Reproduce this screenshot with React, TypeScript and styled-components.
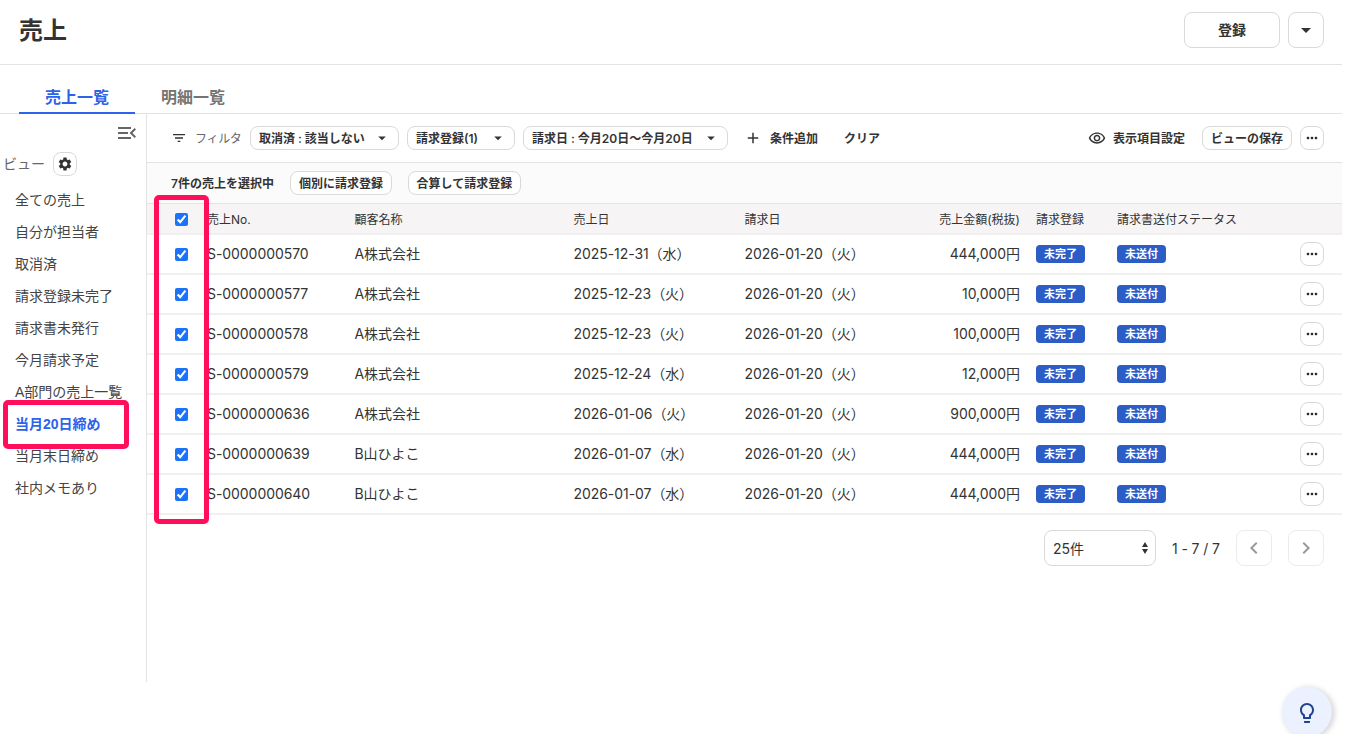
import React from 'react';
import styled, { createGlobalStyle } from 'styled-components';
import {
  MdAdd,
  MdArrowDropDown,
  MdChevronLeft,
  MdChevronRight,
  MdFilterList,
  MdLightbulbOutline,
  MdMenuOpen,
  MdOutlineRemoveRedEye,
  MdSettings,
} from 'react-icons/md';

const GlobalStyle = createGlobalStyle`
  *, *::before, *::after { box-sizing: border-box; }
  body {
    margin: 0;
    background: #fff;
    color: #333;
    font-family: Inter, "Noto Sans CJK JP", sans-serif;
    font-size: 14px;
    overflow: hidden;
  }
  button { font: inherit; color: inherit; padding: 0; cursor: pointer; }
`;

const Page = styled.div`
  position: relative;
  width: 1342px;
  height: 734px;
`;

const Header = styled.header`
  display: flex;
  align-items: center;
  height: 65px;
  padding: 0 18px 5px 19px;
  border-bottom: 1px solid #e3e3e3;
`;

const Title = styled.h1`
  flex: 1;
  margin: 0;
  padding-top: 2px;
  font-size: 24px;
  line-height: 36px;
  font-weight: 700;
`;

const Button = styled.button<{ $w: number; $h?: number; $size?: number; $muted?: boolean }>`
  display: inline-flex;
  align-items: center;
  justify-content: center;
  flex: none;
  width: ${(p) => p.$w}px;
  height: ${(p) => p.$h ?? 24}px;
  border: 1px solid ${(p) => (p.$muted ? '#ebebeb' : '#d9d9d9')};
  border-radius: 8px;
  background: #fff;
  font-size: ${(p) => p.$size ?? 12}px;
  font-weight: 600;
  white-space: nowrap;
  color: ${(p) => (p.$muted ? '#999' : '#333')};
`;

const Label = styled.span`
  padding-bottom: 2px;
`;

const HeaderActions = styled.div`
  display: flex;
  gap: 8px;
`;

const Tabs = styled.nav`
  display: flex;
  height: 49px;
  padding-left: 19px;
  border-bottom: 1px solid #e3e3e3;
`;

const Tab = styled.div<{ $active?: boolean }>`
  display: flex;
  align-items: flex-end;
  justify-content: center;
  width: 116px;
  height: 49px;
  padding-bottom: 3px;
  border-bottom: 2px solid ${(p) => (p.$active ? '#2e62ea' : 'transparent')};
  color: ${(p) => (p.$active ? '#2e62ea' : '#747474')};
  font-size: 16px;
  line-height: 24px;
  font-weight: 600;
`;

const Body = styled.div`
  display: flex;
  height: 568px;
`;

const Sidebar = styled.aside`
  width: 147px;
  border-right: 1px solid #e3e3e3;
`;

const CollapseRow = styled.div`
  display: flex;
  justify-content: flex-end;
  height: 38px;
  padding: 7px 7px 0 0;
  color: #666;
`;

const ViewHeading = styled.div`
  display: flex;
  align-items: center;
  gap: 8px;
  height: 24px;
  padding-left: 3px;
  color: #666;
`;

const ViewList = styled.ul`
  list-style: none;
  margin: 8px 0 0;
  padding: 0 0 0 15px;
`;

const ViewItem = styled.li<{ $active?: boolean }>`
  height: 32px;
  line-height: 32px;
  white-space: nowrap;
  color: ${(p) => (p.$active ? '#2e62ea' : '#444')};
  font-family: "Liberation Sans", "Noto Sans CJK JP", sans-serif;
  font-weight: ${(p) => (p.$active ? 700 : 400)};
`;

const Main = styled.main`
  flex: 1;
  min-width: 0;
`;

const Toolbar = styled.div`
  display: flex;
  align-items: center;
  height: 49px;
  padding: 0 18px 0 24px;
  border-bottom: 1px solid #e3e3e3;
  font-size: 12px;
  font-weight: 600;
`;

const FilterLabel = styled.span`
  width: 55px;
  margin-left: 8px;
  padding-bottom: 1px;
  color: #666;
  font-weight: 400;
  letter-spacing: -0.3px;
`;

const Select = styled(Button)`
  justify-content: space-between;
  padding: 0 7px 0 8px;
  margin-right: 8px;
`;

const TextButton = styled.span<{ $ml?: number; $gap?: number }>`
  display: flex;
  align-items: center;
  gap: ${(p) => p.$gap ?? 0}px;
  margin-left: ${(p) => p.$ml ?? 0}px;
`;

const Spacer = styled.div`
  flex: 1;
`;

const ToolbarEnd = styled.div`
  display: flex;
  align-items: center;
  gap: 8px;
`;

const SelectionBar = styled.div`
  display: flex;
  align-items: center;
  gap: 16px;
  height: 41px;
  padding-left: 24px;
  background: #fbfbfb;
  border-bottom: 1px solid #e3e3e3;
  font-size: 12px;
  font-weight: 600;
`;

const Row = styled.div<{ $head?: boolean }>`
  display: grid;
  grid-template-columns: 52px 147.5px 219px 171px 171.5px 120px 81px 1fr 50px;
  align-items: center;
  height: ${(p) => (p.$head ? 31 : 40)}px;
  border-bottom: 2px solid #f0f0f0;
  background: ${(p) => (p.$head ? '#f6f4f5' : '#fff')};
  font-size: ${(p) => (p.$head ? 12 : 14)}px;
`;

const Cell = styled.div<{ $right?: boolean }>`
  display: flex;
  align-items: center;
  justify-content: ${(p) => (p.$right ? 'flex-end' : 'flex-start')};
  padding: 0 8px;
  white-space: nowrap;
`;

const Value = styled(Cell)`
  padding-bottom: 2px;
  letter-spacing: -0.06px;
`;

const Check = styled.input.attrs({ type: 'checkbox' })`
  width: 13px;
  height: 13px;
  margin: 0 0 0 20px;
  accent-color: #1a73f8;
`;

const HeadCheckCell = styled(Cell)`
  padding-top: 1px;
`;

const Badge = styled.span`
  width: 49px;
  height: 18px;
  border-radius: 4px;
  background: #2c5cc5;
  color: #fff;
  font-size: 11px;
  line-height: 18px;
  font-weight: 600;
  text-align: center;
`;

const Pager = styled.div`
  display: flex;
  align-items: center;
  justify-content: flex-end;
  gap: 16px;
  padding: 15px 18px 0 0;
`;

const PageSize = styled.div`
  display: flex;
  align-items: center;
  justify-content: space-between;
  width: 112px;
  height: 36px;
  padding: 0 6px 0 8px;
  border: 1px solid #d9d9d9;
  border-radius: 8px;
`;

const PageRange = styled.span`
  width: 48px;
  white-space: nowrap;
  letter-spacing: -0.1px;
`;

const Hint = styled.button`
  position: absolute;
  left: 1282px;
  top: 687px;
  display: flex;
  align-items: center;
  justify-content: center;
  width: 50px;
  height: 50px;
  padding: 2px 0 0;
  border: 0;
  border-radius: 50%;
  background: #ebf1fe;
  color: #24438f;
  box-shadow: 2px 1px 6px rgba(0, 0, 0, 0.2);
`;

const Highlight = styled.div<{ $x: number; $y: number; $w: number; $h: number }>`
  position: absolute;
  left: ${(p) => p.$x}px;
  top: ${(p) => p.$y}px;
  width: ${(p) => p.$w}px;
  height: ${(p) => p.$h}px;
  border: 5px solid #ff0f5b;
  border-radius: 5px;
  pointer-events: none;
`;

const views = [
  '全ての売上',
  '自分が担当者',
  '取消済',
  '請求登録未完了',
  '請求書未発行',
  '今月請求予定',
  'A部門の売上一覧',
  '当月20日締め',
  '当月末日締め',
  '社内メモあり',
];

const filters = [
  { label: '取消済 : 該当しない', width: 149 },
  { label: '請求登録(1)', width: 108 },
  { label: '請求日 : 今月20日〜今月20日', width: 205 },
];

const sales = [
  ['S-0000000570', 'A株式会社', '2025-12-31（水）', '444,000円'],
  ['S-0000000577', 'A株式会社', '2025-12-23（火）', '10,000円'],
  ['S-0000000578', 'A株式会社', '2025-12-23（火）', '100,000円'],
  ['S-0000000579', 'A株式会社', '2025-12-24（水）', '12,000円'],
  ['S-0000000636', 'A株式会社', '2026-01-06（火）', '900,000円'],
  ['S-0000000639', 'B山ひよこ', '2026-01-07（水）', '444,000円'],
  ['S-0000000640', 'B山ひよこ', '2026-01-07（水）', '444,000円'],
];

function Dots() {
  return (
    <svg width="12" height="4" viewBox="0 0 12 4" fill="#2b2b2b">
      <rect x="0.8" y="0.8" width="2.4" height="2.4" rx="0.8" />
      <rect x="4.8" y="0.8" width="2.4" height="2.4" rx="0.8" />
      <rect x="8.8" y="0.8" width="2.4" height="2.4" rx="0.8" />
    </svg>
  );
}

export default function App() {
  return (
    <Page>
      <GlobalStyle />
      <Header>
        <Title>売上</Title>
        <HeaderActions>
          <Button $w={96} $h={36} $size={14}><Label>登録</Label></Button>
          <Button $w={36} $h={36}><MdArrowDropDown size={24} /></Button>
        </HeaderActions>
      </Header>
      <Tabs>
        <Tab $active>売上一覧</Tab>
        <Tab>明細一覧</Tab>
      </Tabs>
      <Body>
        <Sidebar>
          <CollapseRow><MdMenuOpen size={24} /></CollapseRow>
          <ViewHeading>
            <Label>ビュー</Label>
            <Button $w={24}><MdSettings size={16} /></Button>
          </ViewHeading>
          <ViewList>
            {views.map((v) => (
              <ViewItem key={v} $active={v === '当月20日締め'}>{v}</ViewItem>
            ))}
          </ViewList>
        </Sidebar>
        <Main>
          <Toolbar>
            <MdFilterList size={16} />
            <FilterLabel>フィルタ</FilterLabel>
            {filters.map((f) => (
              <Select key={f.label} $w={f.width}>
                <Label>{f.label}</Label>
                <MdArrowDropDown size={18} />
              </Select>
            ))}
            <TextButton $ml={8} $gap={8}><MdAdd size={18} /><Label>条件追加</Label></TextButton>
            <TextButton $ml={26}><Label>クリア</Label></TextButton>
            <Spacer />
            <ToolbarEnd>
              <TextButton $gap={7}><MdOutlineRemoveRedEye size={18} /><Label>表示項目設定</Label></TextButton>
              <TextButton $ml={9}><Button $w={90}><Label>ビューの保存</Label></Button></TextButton>
              <Button $w={24}><Dots /></Button>
            </ToolbarEnd>
          </Toolbar>
          <SelectionBar>
            <Label>7件の売上を選択中</Label>
            <Button $w={102}><Label>個別に請求登録</Label></Button>
            <Button $w={113}><Label>合算して請求登録</Label></Button>
          </SelectionBar>
          <Row $head>
            <HeadCheckCell><Check defaultChecked /></HeadCheckCell>
            <Cell>売上No.</Cell>
            <Cell>顧客名称</Cell>
            <Cell>売上日</Cell>
            <Cell>請求日</Cell>
            <Cell $right>売上金額(税抜)</Cell>
            <Cell>請求登録</Cell>
            <Cell>請求書送付ステータス</Cell>
          </Row>
          {sales.map(([no, customer, date, amount]) => (
            <Row key={no}>
              <Cell><Check defaultChecked /></Cell>
              <Value>{no}</Value>
              <Value>{customer}</Value>
              <Value>{date}</Value>
              <Value>2026-01-20（火）</Value>
              <Value $right>{amount}</Value>
              <Cell><Badge>未完了</Badge></Cell>
              <Cell><Badge>未送付</Badge></Cell>
              <Cell><Button $w={24}><Dots /></Button></Cell>
            </Row>
          ))}
          <Pager>
            <PageSize>
              25件
              <svg width="8" height="12" viewBox="0 0 8 12" fill="#333">
                <path d="M4 0 7 5H1zM4 12 1 7h6z" />
              </svg>
            </PageSize>
            <PageRange>1 - 7 / 7</PageRange>
            <Button $w={36} $h={36} $muted><MdChevronLeft size={24} /></Button>
            <Button $w={36} $h={36} $muted><MdChevronRight size={24} /></Button>
          </Pager>
        </Main>
      </Body>
      <Highlight $x={154} $y={195} $w={55} $h={329} />
      <Highlight $x={3} $y={400} $w={126} $h={49} />
      <Hint><MdLightbulbOutline size={24} /></Hint>
    </Page>
  );
}
